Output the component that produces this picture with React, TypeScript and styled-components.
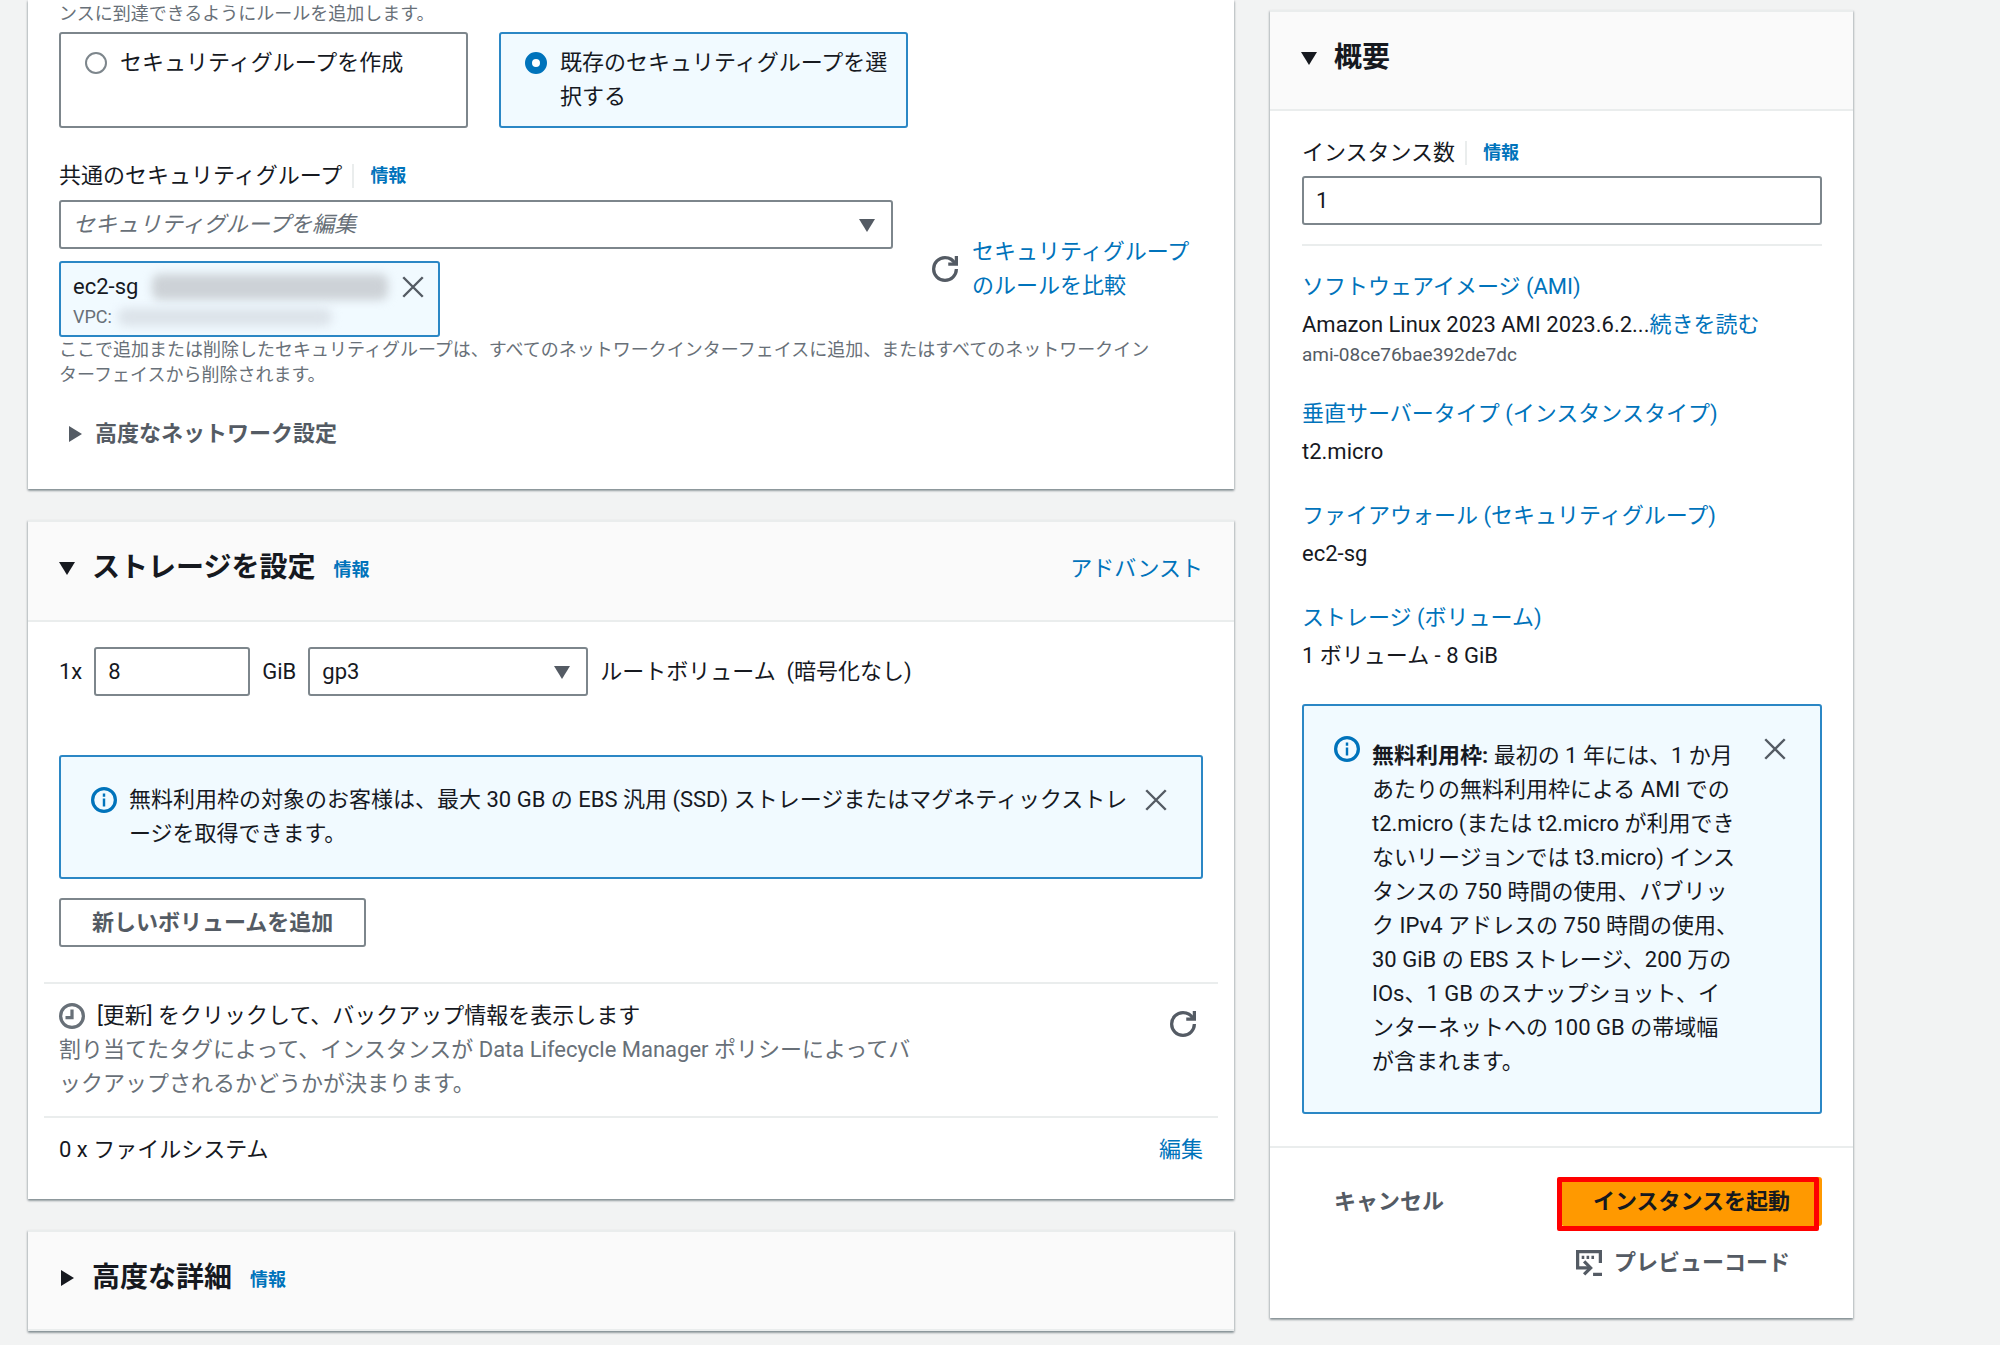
import React from "react";
import styled, { createGlobalStyle, css } from "styled-components";

const font = `Roboto, "Noto Sans CJK JP", sans-serif`;
const ink = "#16191f";
const grey = "#545b64";
const muted = "#687078";
const blue = "#0073bb";
const edge = "#eaeded";
const notice = "#f1faff";

const GlobalStyle = createGlobalStyle`
  *, *::before, *::after { box-sizing: border-box; }
  body {
    margin: 0;
    background: #f2f3f3;
    color: ${ink};
    font: 400 22px/34px ${font};
  }
  button, input, select { font: inherit; color: inherit; margin: 0; }
  h2, p, dl, dd, dt { margin: 0; }
`;

/* ---------- icons ---------- */

const Glyph = styled.svg`
  flex: none;
  display: block;
  width: 26px;
  height: 26px;
  fill: none;
  stroke: currentColor;
  stroke-width: 2;
`;

const Caret = styled.svg`
  flex: none;
  display: block;
  width: 16px;
  height: 16px;
  fill: currentColor;
`;

const RefreshIcon = () => (
  <Glyph viewBox="0 0 16 16" aria-hidden="true">
    <path d="M10 5h5V0" />
    <path d="M15 8c0 3.87-3.13 7-7 7s-7-3.13-7-7 3.13-7 7-7c2.79 0 5.2 1.63 6.33 4" />
  </Glyph>
);

const ThinGlyph = styled(Glyph)`
  stroke-width: 1.5;
`;

const CloseIcon = () => (
  <ThinGlyph viewBox="0 0 16 16" aria-hidden="true">
    <path d="m2 2 12 12M14 2 2 14" />
  </ThinGlyph>
);

const InfoIcon = () => (
  <Glyph viewBox="0 0 16 16" aria-hidden="true">
    <circle cx="8" cy="8" r="7" />
    <path d="M8 7v5M8 4v2" strokeWidth="1.5" />
  </Glyph>
);

const ClockIcon = () => (
  <Glyph viewBox="0 0 16 16" aria-hidden="true">
    <circle cx="8" cy="8" r="7" />
    <path d="M8 4v5H4" />
  </Glyph>
);

const ScriptIcon = () => (
  <Glyph viewBox="0 0 16 16" aria-hidden="true">
    <path d="M15 8V1H1v10h7.500" />
    <path d="m5 7 4 4-4 4" />
    <path d="M10.500 15H16" />
    <path d="M3.500 4.500h1.600M6.500 4.500h1.600M9.500 4.500h1.600" />
  </Glyph>
);

const CaretDown = () => (
  <Caret viewBox="0 0 16 16" aria-hidden="true">
    <path d="M0 2h16L8 15z" />
  </Caret>
);

const CaretRight = () => (
  <Caret viewBox="0 0 16 16" aria-hidden="true">
    <path d="M2 0v16l13-8z" />
  </Caret>
);

/* ---------- page ---------- */

const Page = styled.div`
  display: grid;
  grid-template-columns: minmax(0, 1fr) 583px;
  align-items: start;
  gap: 36px;
  padding: 0 147px 14px 28px;
`;

const Main = styled.main`
  display: flex;
  flex-direction: column;
  gap: 31px;
`;

const Side = styled.aside`
  padding-top: 10px;
`;

const Panel = styled.section`
  background: #fff;
  box-shadow: 0 2px 2px rgba(0, 28, 36, 0.3), 1px 1px 2px rgba(0, 28, 36, 0.15),
    -1px 1px 2px rgba(0, 28, 36, 0.15);
`;

const PanelHeader = styled.header`
  display: flex;
  align-items: baseline;
  justify-content: space-between;
  padding: 29px 31px 34px;
  background: #fafafa;
  border-top: 2px solid ${edge};
  border-bottom: 2px solid ${edge};
`;

const HeaderGroup = styled.div`
  display: flex;
  align-items: baseline;
  gap: 18px;
`;

const Title = styled.h2`
  font-size: 28px;
  line-height: 34px;
  font-weight: 700;
`;

const Disclosure = styled.button<{ $small?: boolean }>`
  display: flex;
  align-items: center;
  gap: ${(p) => (p.$small ? "12px" : "17px")};
  padding: 0;
  border: 0;
  background: none;
  font-weight: 700;
  color: ${(p) => (p.$small ? grey : "inherit")};
`;

const Link = styled.a<{ $info?: boolean }>`
  color: ${blue};
  text-decoration: none;
  ${(p) =>
    p.$info &&
    css`
      font-size: 18px;
      line-height: 24px;
      font-weight: 700;
    `}
`;

/* ---------- form parts ---------- */

const box = css`
  height: 49px;
  border: 2px solid #7d868c;
  border-radius: 3px;
  background: #fff;
`;

const TextInput = styled.input`
  ${box}
  width: 100%;
  padding: 0 12px;
`;

const SelectWrap = styled.div<{ $muted?: boolean }>`
  position: relative;
  display: grid;
  color: ${grey};

  select {
    ${box}
    width: 100%;
    padding: 0 48px 0 12px;
    appearance: none;
    color: ${(p) => (p.$muted ? muted : ink)};
    font-style: ${(p) => (p.$muted ? "italic" : "normal")};
  }

  svg {
    position: absolute;
    right: 18px;
    top: 17px;
    pointer-events: none;
  }
`;

const FieldHead = styled.div`
  display: flex;
  align-items: center;
  gap: 10px;
`;

const Divided = styled.span`
  display: flex;
  padding-left: 16px;
  border-left: 2px solid ${edge};
`;

const Helper = styled.p`
  font-size: 18px;
  line-height: 25px;
  color: ${muted};
`;

const Muted = styled.p`
  color: ${muted};
`;

const IconButton = styled.button`
  flex: none;
  padding: 0;
  border: 0;
  background: none;
  color: ${grey};
`;

/* ---------- network panel ---------- */

const NetworkBody = styled.div`
  display: flex;
  flex-direction: column;
  padding: 1px 31px 38px;
`;

const Tiles = styled.div`
  display: flex;
  gap: 31px;
  padding: 6px 0 31px;
`;

const Tile = styled.label<{ $on?: boolean }>`
  display: flex;
  align-items: flex-start;
  gap: 13px;
  width: 409px;
  padding: 12px 14px 12px 24px;
  border: 2px solid ${(p) => (p.$on ? "#2b87c5" : "#7d868c")};
  border-radius: 3px;
  background: ${(p) => (p.$on ? notice : "#fff")};
`;

const Radio = styled.input`
  flex: none;
  appearance: none;
  width: 22px;
  height: 22px;
  margin: 6px 0;
  border: 2px solid #7d868c;
  border-radius: 50%;
  background: #fff;

  &:checked {
    border: 7px solid ${blue};
  }
`;

const GroupRow = styled.div`
  display: grid;
  grid-template-columns: minmax(0, 834px) auto;
  align-items: center;
  justify-content: start;
  gap: 39px;
  padding-top: 7px;
`;

const GroupPick = styled.div`
  display: flex;
  flex-direction: column;
  gap: 12px;
`;

const GroupTools = styled.div`
  display: flex;
  align-items: center;
  gap: 14px;
  white-space: nowrap;
`;

const Token = styled.div`
  display: flex;
  align-items: flex-start;
  justify-content: space-between;
  width: 381px;
  padding: 7px 12px 6px 12px;
  border: 2px solid #2b87c5;
  border-radius: 3px;
  background: ${notice};

  button {
    padding-top: 4px;
  }
`;

const TokenLine = styled.div<{ $small?: boolean }>`
  display: flex;
  align-items: center;
  gap: ${(p) => (p.$small ? "6px" : "14px")};
  font-size: ${(p) => (p.$small ? "18px" : "22px")};
  line-height: ${(p) => (p.$small ? "25px" : "34px")};
  color: ${(p) => (p.$small ? muted : ink)};
`;

const Redacted = styled.span<{ $small?: boolean }>`
  width: ${(p) => (p.$small ? "214px" : "236px")};
  height: ${(p) => (p.$small ? "18px" : "26px")};
  border-radius: 8px;
  background: ${(p) => (p.$small ? "#dce3ea" : "#cdd2d7")};
  filter: blur(5px);
`;

const Advanced = styled.div`
  padding: 30px 0 0 8px;
`;

/* ---------- storage panel ---------- */

const StorageBody = styled.div`
  padding: 25px 31px 17px;
`;

const VolumeRow = styled.div`
  display: flex;
  align-items: center;
  gap: 12px;
  padding-bottom: 59px;

  input {
    width: 156px;
  }

  select {
    width: 280px;
  }
`;

const Notice = styled.div<{ $tall?: boolean }>`
  display: flex;
  align-items: flex-start;
  padding: 26px 32px 26px 30px;
  border: 2px solid #2b87c5;
  border-radius: 3px;
  background: ${notice};

  > svg {
    margin-top: 4px;
    color: ${blue};
  }

  > button {
    margin-top: 4px;
  }

  > p {
    flex: 1;
    padding: ${(p) => (p.$tall ? "7px 0 7px 12px" : "0 0 0 12px")};
    white-space: nowrap;
  }
`;

const OutlineButton = styled.button`
  ${box}
  margin: 19px 0 35px;
  padding: 0 31px;
  color: ${grey};
  font-weight: 700;
`;

const Strip = styled.div`
  display: flex;
  align-items: flex-start;
  justify-content: space-between;
  margin: 0 -15px;
  padding: 15px;
  border-top: 2px solid ${edge};

  > button {
    padding: 12px 7px;
  }
`;

const IconLine = styled.div`
  display: flex;
  align-items: center;
  gap: 12px;

  svg {
    color: ${muted};
  }
`;

/* ---------- summary ---------- */

const SummaryBody = styled.div`
  display: flex;
  flex-direction: column;
  padding: 25px 31px 32px 32px;
`;

const CountField = styled.div`
  display: flex;
  flex-direction: column;
  gap: 6px;
  padding-bottom: 19px;
  border-bottom: 2px solid ${edge};
`;

const Facts = styled.dl`
  display: flex;
  flex-direction: column;
  gap: 30px;
  padding: 24px 0 31px;

  dt {
    padding-bottom: 4px;
  }
`;

const Small = styled.div`
  font-size: 19px;
  line-height: 25px;
  color: ${grey};
`;

const SummaryFooter = styled.footer`
  display: flex;
  flex-direction: column;
  align-items: flex-end;
  gap: 12px;
  padding: 29px 31px 31px 32px;
  border-top: 2px solid ${edge};
`;

const Actions = styled.div`
  align-self: stretch;
  display: flex;
  justify-content: space-between;
`;

const PlainButton = styled.button`
  display: flex;
  align-items: center;
  gap: 12px;
  height: 49px;
  padding: 0 32px;
  border: 0;
  background: none;
  color: ${grey};
  font-weight: 700;
`;

const LaunchWrap = styled.div`
  position: relative;

  &::after {
    content: "";
    position: absolute;
    inset: 0 3px -5px -4px;
    border: 5px solid #f00;
    border-radius: 2px;
    pointer-events: none;
  }
`;

const LaunchButton = styled.button`
  display: block;
  height: 49px;
  padding: 0 32px;
  border: 0;
  border-radius: 3px;
  background: #f90;
  font-weight: 700;
`;

export default function App() {
  return (
    <>
      <GlobalStyle />
      <Page>
        <Main>
          <Panel>
            <NetworkBody>
              <Helper>ンスに到達できるようにルールを追加します。</Helper>
              <Tiles>
                <Tile>
                  <Radio type="radio" name="sg" />
                  <span>セキュリティグループを作成</span>
                </Tile>
                <Tile $on>
                  <Radio type="radio" name="sg" defaultChecked />
                  <span>
                    既存のセキュリティグループを選
                    <br />
                    択する
                  </span>
                </Tile>
              </Tiles>
              <FieldHead>
                <label htmlFor="groups">共通のセキュリティグループ</label>
                <Divided>
                  <Link $info href="#">
                    情報
                  </Link>
                </Divided>
              </FieldHead>
              <GroupRow>
                <GroupPick>
                  <SelectWrap $muted>
                    <select id="groups">
                      <option>セキュリティグループを編集</option>
                    </select>
                    <CaretDown />
                  </SelectWrap>
                  <Token>
                    <div>
                      <TokenLine>
                        ec2-sg <Redacted />
                      </TokenLine>
                      <TokenLine $small>
                        VPC: <Redacted $small />
                      </TokenLine>
                    </div>
                    <IconButton aria-label="ec2-sg を削除">
                      <CloseIcon />
                    </IconButton>
                  </Token>
                </GroupPick>
                <GroupTools>
                  <IconButton aria-label="更新">
                    <RefreshIcon />
                  </IconButton>
                  <Link href="#">
                    セキュリティグループ
                    <br />
                    のルールを比較
                  </Link>
                </GroupTools>
              </GroupRow>
              <Helper>
                ここで追加または削除したセキュリティグループは、すべてのネットワークインターフェイスに追加、またはすべてのネットワークイン
                <br />
                ターフェイスから削除されます。
              </Helper>
              <Advanced>
                <Disclosure $small>
                  <CaretRight />
                  高度なネットワーク設定
                </Disclosure>
              </Advanced>
            </NetworkBody>
          </Panel>

          <Panel>
            <PanelHeader>
              <HeaderGroup>
                <Disclosure>
                  <CaretDown />
                  <Title as="span">ストレージを設定</Title>
                </Disclosure>
                <Link $info href="#">
                  情報
                </Link>
              </HeaderGroup>
              <Link href="#">アドバンスト</Link>
            </PanelHeader>
            <StorageBody>
              <VolumeRow>
                <label htmlFor="size">1x</label>
                <TextInput id="size" defaultValue="8" />
                <label htmlFor="kind">GiB</label>
                <SelectWrap>
                  <select id="kind">
                    <option>gp3</option>
                  </select>
                  <CaretDown />
                </SelectWrap>
                <span>ルートボリューム&nbsp; (暗号化なし)</span>
              </VolumeRow>
              <Notice>
                <InfoIcon />
                <p>
                  無料利用枠の対象のお客様は、最大 30 GB の EBS 汎用 (SSD) ストレージまたはマグネティックストレ
                  <br />
                  ージを取得できます。
                </p>
                <IconButton aria-label="閉じる">
                  <CloseIcon />
                </IconButton>
              </Notice>
              <OutlineButton>新しいボリュームを追加</OutlineButton>
              <Strip>
                <div>
                  <IconLine>
                    <ClockIcon />
                    <span>[更新] をクリックして、バックアップ情報を表示します</span>
                  </IconLine>
                  <Muted>
                    割り当てたタグによって、インスタンスが Data Lifecycle Manager ポリシーによってバ
                    <br />
                    ックアップされるかどうかが決まります。
                  </Muted>
                </div>
                <IconButton aria-label="更新">
                  <RefreshIcon />
                </IconButton>
              </Strip>
              <Strip>
                <span>0 x ファイルシステム</span>
                <Link href="#">編集</Link>
              </Strip>
            </StorageBody>
          </Panel>

          <Panel>
            <PanelHeader>
              <HeaderGroup>
                <Disclosure>
                  <CaretRight />
                  <Title as="span">高度な詳細</Title>
                </Disclosure>
                <Link $info href="#">
                  情報
                </Link>
              </HeaderGroup>
            </PanelHeader>
          </Panel>
        </Main>

        <Side>
          <Panel>
            <PanelHeader>
              <Disclosure>
                <CaretDown />
                <Title as="span">概要</Title>
              </Disclosure>
            </PanelHeader>
            <SummaryBody>
              <CountField>
                <FieldHead>
                  <label htmlFor="count">インスタンス数</label>
                  <Divided>
                    <Link $info href="#">
                      情報
                    </Link>
                  </Divided>
                </FieldHead>
                <TextInput id="count" defaultValue="1" />
              </CountField>
              <Facts>
                <div>
                  <dt>
                    <Link href="#">ソフトウェアイメージ (AMI)</Link>
                  </dt>
                  <dd>
                    Amazon Linux 2023 AMI 2023.6.2...<Link href="#">続きを読む</Link>
                    <Small>ami-08ce76bae392de7dc</Small>
                  </dd>
                </div>
                <div>
                  <dt>
                    <Link href="#">垂直サーバータイプ (インスタンスタイプ)</Link>
                  </dt>
                  <dd>t2.micro</dd>
                </div>
                <div>
                  <dt>
                    <Link href="#">ファイアウォール (セキュリティグループ)</Link>
                  </dt>
                  <dd>ec2-sg</dd>
                </div>
                <div>
                  <dt>
                    <Link href="#">ストレージ (ボリューム)</Link>
                  </dt>
                  <dd>1 ボリューム - 8 GiB</dd>
                </div>
              </Facts>
              <Notice $tall>
                <InfoIcon />
                <p>
                  <strong>無料利用枠:</strong> 最初の 1 年には、1 か月
                  <br />
                  あたりの無料利用枠による AMI での
                  <br />
                  t2.micro (または t2.micro が利用でき
                  <br />
                  ないリージョンでは t3.micro) インス
                  <br />
                  タンスの 750 時間の使用、パブリッ
                  <br />
                  ク IPv4 アドレスの 750 時間の使用、
                  <br />
                  30 GiB の EBS ストレージ、200 万の
                  <br />
                  IOs、1 GB のスナップショット、イ
                  <br />
                  ンターネットへの 100 GB の帯域幅
                  <br />
                  が含まれます。
                </p>
                <IconButton aria-label="閉じる">
                  <CloseIcon />
                </IconButton>
              </Notice>
            </SummaryBody>
            <SummaryFooter>
              <Actions>
                <PlainButton>キャンセル</PlainButton>
                <LaunchWrap>
                  <LaunchButton>インスタンスを起動</LaunchButton>
                </LaunchWrap>
              </Actions>
              <PlainButton>
                <ScriptIcon />
                プレビューコード
              </PlainButton>
            </SummaryFooter>
          </Panel>
        </Side>
      </Page>
    </>
  );
}
